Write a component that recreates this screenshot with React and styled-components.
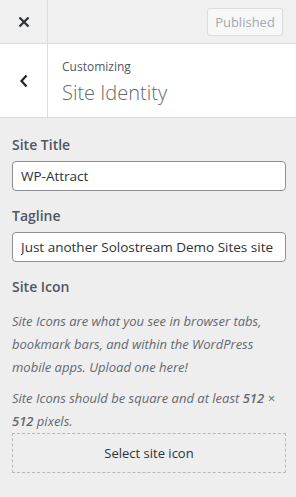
import React from 'react';
import styled, { createGlobalStyle } from 'styled-components';

const GlobalStyle = createGlobalStyle`
  html, body {
    margin: 0;
    padding: 0;
    background: #eeeeee;
    font-family: "Open Sans", "Noto Sans", sans-serif;
    color: #1d2327;
  }
  * { box-sizing: border-box; }
`;

const Panel = styled.div`
  width: 296px;
  height: 497px;
  background: #eeeeee;
  display: flex;
  flex-direction: column;
  overflow: hidden;
`;

const TopBar = styled.div`
  height: 44px;
  display: flex;
  align-items: stretch;
  border-bottom: 1px solid #dcdcde;
  background: #f0f0f0;
`;

const IconCell = styled.button`
  width: 48px;
  flex: none;
  border: none;
  border-right: 1px solid #dcdcde;
  background: transparent;
  display: flex;
  align-items: center;
  justify-content: center;
  color: #3c434a;
  padding: 0;
`;

const BarSpacer = styled.div`
  flex: 1;
  display: flex;
  justify-content: flex-end;
  align-items: center;
  padding-right: 13px;
`;

const PublishedButton = styled.button`
  height: 28px;
  width: 76px;
  border: 1px solid #dcdcde;
  border-radius: 3px;
  background: #f6f7f7;
  color: #a7aaad;
  font-family: inherit;
  font-size: 13px;
  padding: 0;
`;

const Header = styled.div`
  height: 74px;
  display: flex;
  background: #fff;
  border-bottom: 1px solid #dcdcde;
`;

const HeaderText = styled.div`
  padding: 13px 14px;
  display: flex;
  flex-direction: column;
`;

const Small = styled.span`
  font-size: 12px;
  line-height: 20px;
  color: #50575e;
`;

const Title = styled.h3`
  margin: 3px 0 0;
  font-size: 20px;
  font-weight: 300;
  line-height: 26px;
  color: #646970;
`;

const Content = styled.div`
  padding: 17px 10px 0 12px;
  display: flex;
  flex-direction: column;
`;

const Label = styled.div`
  font-size: 14px;
  font-weight: 600;
  line-height: 20px;
  color: #50575e;
  margin-bottom: ${(p) => p.$gap || 6}px;
`;

const Input = styled.input`
  width: 274px;
  height: 30px;
  flex: none;
  border: 1px solid #8c8f94;
  border-radius: 4px;
  background: #fff;
  padding: 0 8px;
  font-family: inherit;
  font-size: 13.5px;
  color: #2c3338;
  margin-bottom: 15px;
  outline: none;
`;

const Note = styled.p`
  margin: 0 0 ${(p) => (p.$last ? 0 : 8)}px;
  font-size: 13px;
  font-style: italic;
  line-height: 23px;
  color: #646970;
  strong { font-weight: 600; }
`;

const SelectButton = styled.button`
  width: 274px;
  height: 40px;
  flex: none;
  border: 1px dashed #b4b9be;
  background: transparent;
  font-family: inherit;
  font-size: 13px;
  color: #2c3338;
`;

export default function App() {
  return (
    <Panel>
      <GlobalStyle />
      <TopBar>
        <IconCell aria-label="Close">
          <svg width="12" height="12" viewBox="0 0 12 12">
            <path d="M1.5 1.5 L10.5 10.5 M10.5 1.5 L1.5 10.5" stroke="#2c3338" strokeWidth="2.2" />
          </svg>
        </IconCell>
        <BarSpacer>
          <PublishedButton disabled>Published</PublishedButton>
        </BarSpacer>
      </TopBar>
      <Header>
        <IconCell aria-label="Back">
          <svg width="10" height="14" viewBox="0 0 10 14">
            <path d="M7.5 1.5 L2.5 7 L7.5 12.5" stroke="#1d2327" strokeWidth="2.2" fill="none" />
          </svg>
        </IconCell>
        <HeaderText>
          <Small>Customizing</Small>
          <Title>Site Identity</Title>
        </HeaderText>
      </Header>
      <Content>
        <Label>Site Title</Label>
        <Input defaultValue="WP-Attract" />
        <Label>Tagline</Label>
        <Input defaultValue="Just another Solostream Demo Sites site" />
        <Label $gap={13}>Site Icon</Label>
        <Note>
          Site Icons are what you see in browser tabs, bookmark bars, and within the WordPress mobile apps. Upload one here!
        </Note>
        <Note $last>
          Site Icons should be square and at least <strong>512</strong> × <strong>512</strong> pixels.
        </Note>
        <SelectButton>Select site icon</SelectButton>
      </Content>
    </Panel>
  );
}
